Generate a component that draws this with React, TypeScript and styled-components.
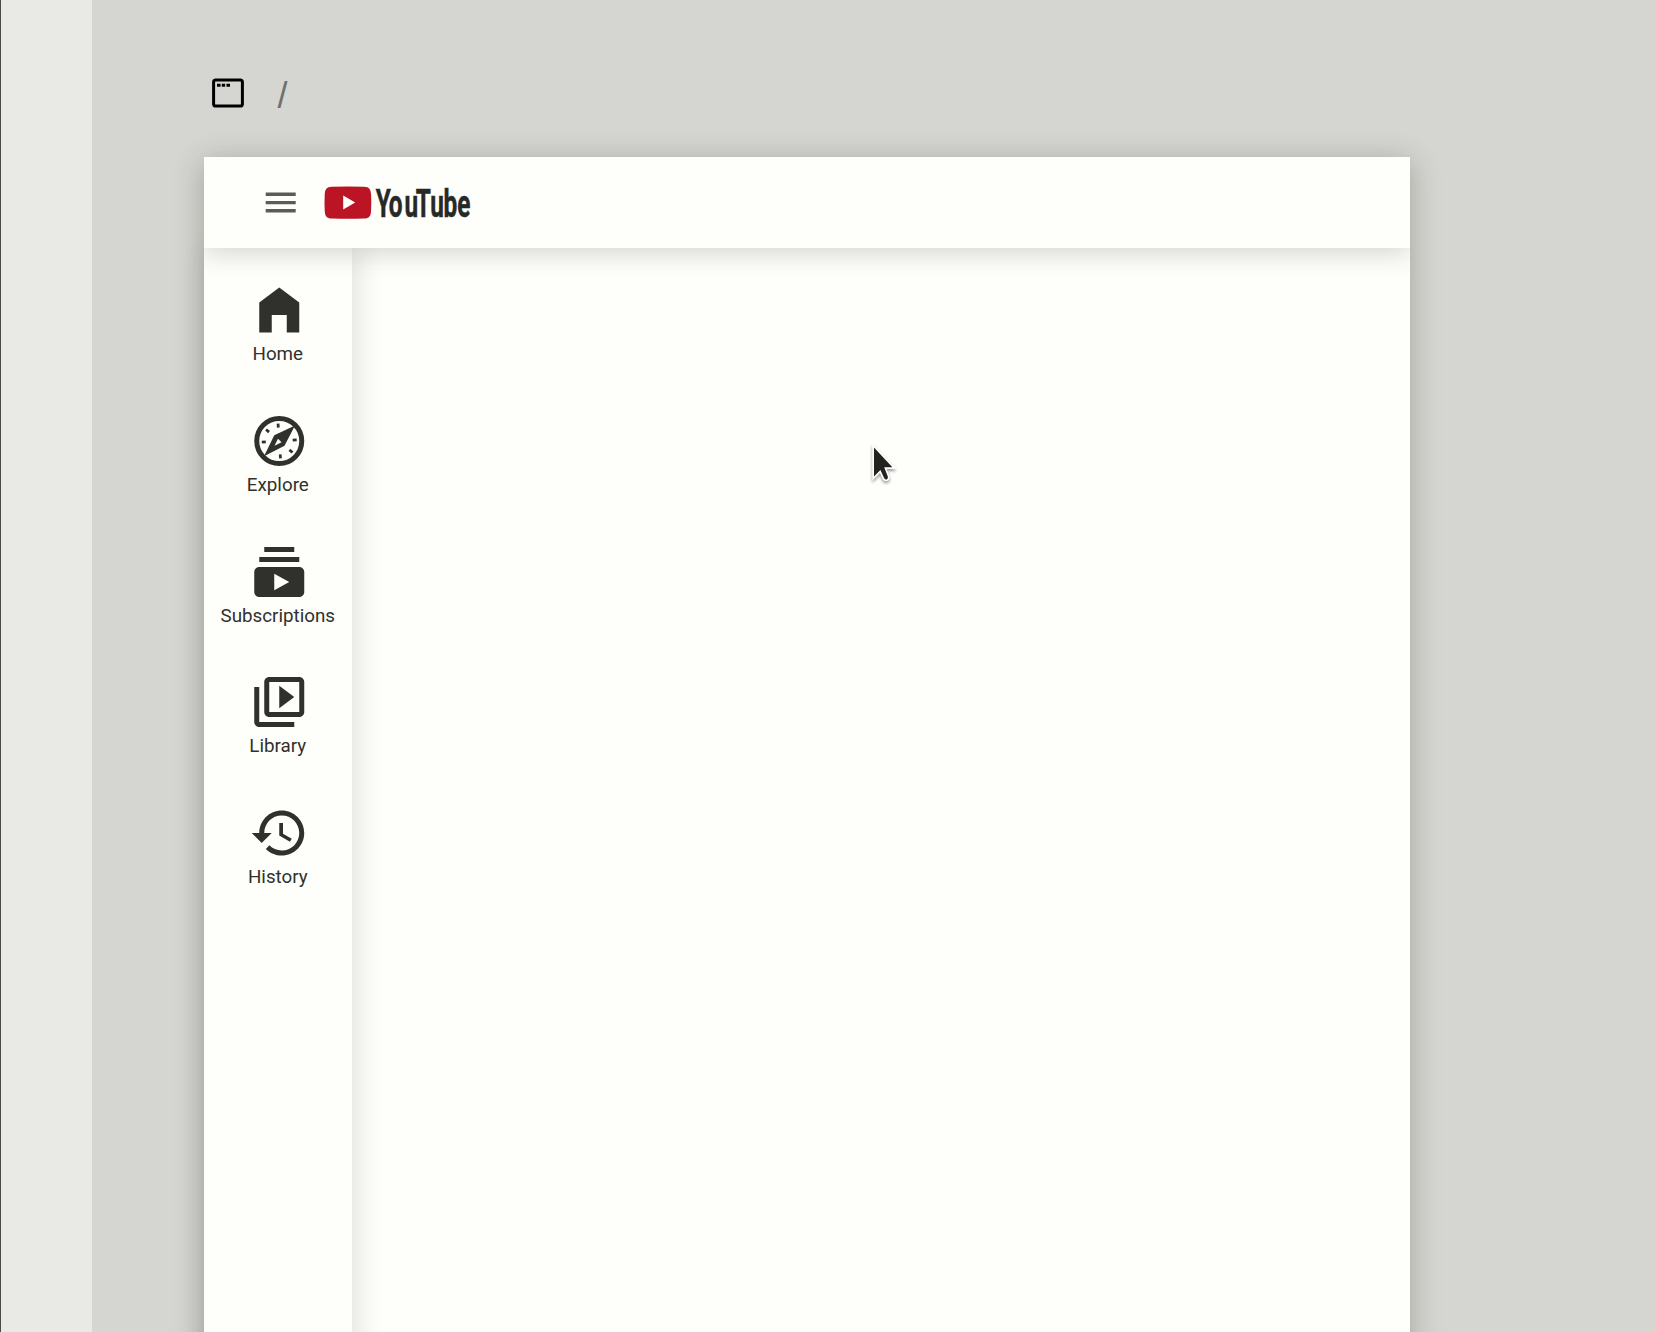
import React from "react";
import styled, { createGlobalStyle } from "styled-components";

const GlobalStyle = createGlobalStyle`
  * { box-sizing: border-box; }
  body { margin: 0; font-family: Roboto, "Liberation Sans", sans-serif; background: #d5d6d1; }
`;

const Canvas = styled.div`
  position: relative;
  display: flex;
  width: 1656px;
  height: 1332px;
  overflow: hidden;
  background: #d5d6d1;
`;

const Rail = styled.aside`
  flex: none;
  width: 92px;
  background: #e9eae5;
  border-left: 1px solid #4b4a46;
`;

const Stage = styled.main`
  flex: 1;
  display: flex;
  flex-direction: column;
  padding-left: 112px;
`;

const Breadcrumb = styled.nav`
  flex: none;
  display: flex;
  align-items: center;
  height: 157px;
  padding: 29px 0 0 8px;
  gap: 33.5px;
`;

const Slash = styled.span`
  padding-top: 5px;
  font: 36px/40px "Liberation Sans", Arial, sans-serif;
  color: #70716d;
`;

const Frame = styled.section`
  display: flex;
  flex-direction: column;
  width: 1206.4px;
  height: 1240px;
  flex: none;
  background: #fefffb;
  box-shadow: 0 5px 28px rgba(40, 42, 34, 0.3);
`;

const Header = styled.header`
  position: relative;
  z-index: 2;
  flex: none;
  display: flex;
  align-items: center;
  height: 91px;
  padding-left: 61px;
  background: #fefffb;
`;

const Shade = styled.div`
  position: absolute;
  inset: 0 0 -40px;
  overflow: hidden;
  pointer-events: none;
  z-index: -1;

  &::before {
    content: "";
    display: block;
    height: 91px;
    box-shadow: 0 5px 25px rgba(40, 42, 34, 0.2);
    background: #fefffb;
  }
`;

const MenuButton = styled.button`
  display: flex;
  width: 32px;
  padding: 0;
  margin: 0 27px 0 0;
  border: 0;
  background: none;
`;

const Body = styled.div`
  flex: 1;
  display: flex;
`;

const Sidebar = styled.nav`
  display: flex;
  flex-direction: column;
  width: 147.6px;
  padding-top: 32.1px;
  background: #fefffb;
  box-shadow: 5px 0 26px rgba(40, 42, 34, 0.14);
`;

const Item = styled.a`
  flex: none;
  display: flex;
  flex-direction: column;
  align-items: center;
  height: 130.8px;
  color: #30312c;

  svg { display: block; margin-left: 3px; }
`;

const Label = styled.span`
  margin-top: 2px;
  font-size: 18.8px;
  line-height: 24px;
`;

const WordMark = styled.text`
  font-family: Roboto, sans-serif;
  font-weight: 700;
  font-size: 39px;
  fill: #282925;
  stroke: #282925;
  stroke-width: 0.5px;
`;

const Pointer = styled.svg`
  position: absolute;
  left: 864px;
  top: 436px;
  filter: drop-shadow(0 2px 1.5px rgba(0, 0, 0, 0.4));
`;

const items = [
  { name: "Home", path: "M4 21V9l8-6 8 6v12h-5v-7H9v7z" },
  { name: "Explore", path: "" },
  { name: "Subscriptions", path: "M20 8H4V6h16v2zm-2-6H6v2h12V2zm4 10v8c0 1.1-.9 2-2 2H4c-1.1 0-2-.9-2-2v-8c0-1.1.9-2 2-2h16c1.1 0 2 .9 2 2zm-6 4l-6-3.27v6.53L16 16z" },
  { name: "Library", path: "M4 6H2v14c0 1.1.9 2 2 2h14v-2H4V6zm16-4H8c-1.1 0-2 .9-2 2v12c0 1.1.9 2 2 2h12c1.1 0 2-.9 2-2V4c0-1.1-.9-2-2-2zm0 14H8V4h12v12zM12 5.5v9l6-4.5z" },
  { name: "History", path: "M13 3c-4.97 0-9 4.03-9 9H1l3.89 3.89.07.14L9 12H6c0-3.87 3.13-7 7-7s7 3.13 7 7-3.13 7-7 7c-1.93 0-3.68-.79-4.94-2.06l-1.42 1.42C8.27 19.99 10.51 21 13 21c4.97 0 9-4.03 9-9s-4.03-9-9-9zm-1 5v5l4.28 2.54.72-1.21-3.5-2.08V8H12z" },
];

const Compass = () => (
  <g fill="none" stroke="currentColor">
    <circle cx="12" cy="12" r="9" strokeWidth="2" />
    <g strokeWidth="1.1">
      {[-4, 86, 131, 176, 266, 311].map((a) => (
        <path key={a} d="M12 5v1.6" transform={`rotate(${a} 12 12)`} />
      ))}
    </g>
    <path
      fill="currentColor"
      stroke="none"
      fillRule="evenodd"
      d="M18.3 5.8L14.1 13.9L5.9 18.1L10 9.7zM11.5 11.1L10.1 13.9L12.9 12.5z"
    />
  </g>
);

const WindowIcon = () => (
  <svg width="32" height="30" viewBox="0 0 32 30">
    <rect x="1.6" y="1.9" width="28.8" height="26.2" rx="2.2" fill="none" stroke="#000" strokeWidth="3" />
    <path d="M5 5.8h3.6v3H5zM9.8 5.8h3.4v3H9.8zM14.5 5.8H18v3h-3.5z" fill="#000" />
  </svg>
);

const MenuIcon = () => (
  <svg width="32" height="23" viewBox="0 0 32 23">
    <path d="M.7 1.6h30V5h-30zM.7 9.9h30v3.4h-30zM.7 18.1h30v3.4h-30z" fill="#5b5c56" />
  </svg>
);

const Logo = () => (
  <svg width="190" height="46" viewBox="324 180 190 46">
    <path
      fill="#bb1424"
      d="M332 186.8Q348 186.2 364 186.8C369.4 187 370.8 189.4 371.1 195Q371.5 202.6 371.1 210.4C370.8 216.2 369.4 218.2 364 218.5Q348 219.1 332 218.5C326.4 218.2 325 216.2 324.7 210.4Q324.3 202.6 324.7 195C325 189.4 326.4 187 332 186.8z"
    />
    <path fill="#fff" d="M343.2 195.5v14l12-7z" />
    <g transform="translate(375.7 216.5) scale(.625 1)">
      <WordMark x="0 21 46 64.2 87.2 108.4 130.6" y="0">YouTube</WordMark>
    </g>
  </svg>
);

export default function App() {
  return (
    <Canvas>
      <GlobalStyle />
      <Rail />
      <Stage>
        <Breadcrumb>
          <WindowIcon />
          <Slash>/</Slash>
        </Breadcrumb>
        <Frame>
          <Header>
            <Shade />
            <MenuButton aria-label="Menu">
              <MenuIcon />
            </MenuButton>
            <Logo />
          </Header>
          <Body>
            <Sidebar>
              {items.map(({ name, path }) => (
                <Item key={name}>
                  <svg width="60" height="60" viewBox="-0.1 0 24 24" fill="currentColor">
                    {path ? <path d={path} /> : <Compass />}
                  </svg>
                  <Label>{name}</Label>
                </Item>
              ))}
            </Sidebar>
          </Body>
        </Frame>
      </Stage>
      <Pointer width="40" height="54" viewBox="864 436 40 54">
        <path
          d="M874 447.5V476.5L880.4 470L884.2 478.2Q885.4 480 887 479.2Q888.4 478.2 887.8 476.6L884.2 467.3H892.4z"
          fill="#22231f"
          stroke="#fff"
          strokeWidth="3.4"
          paintOrder="stroke"
        />
      </Pointer>
    </Canvas>
  );
}
